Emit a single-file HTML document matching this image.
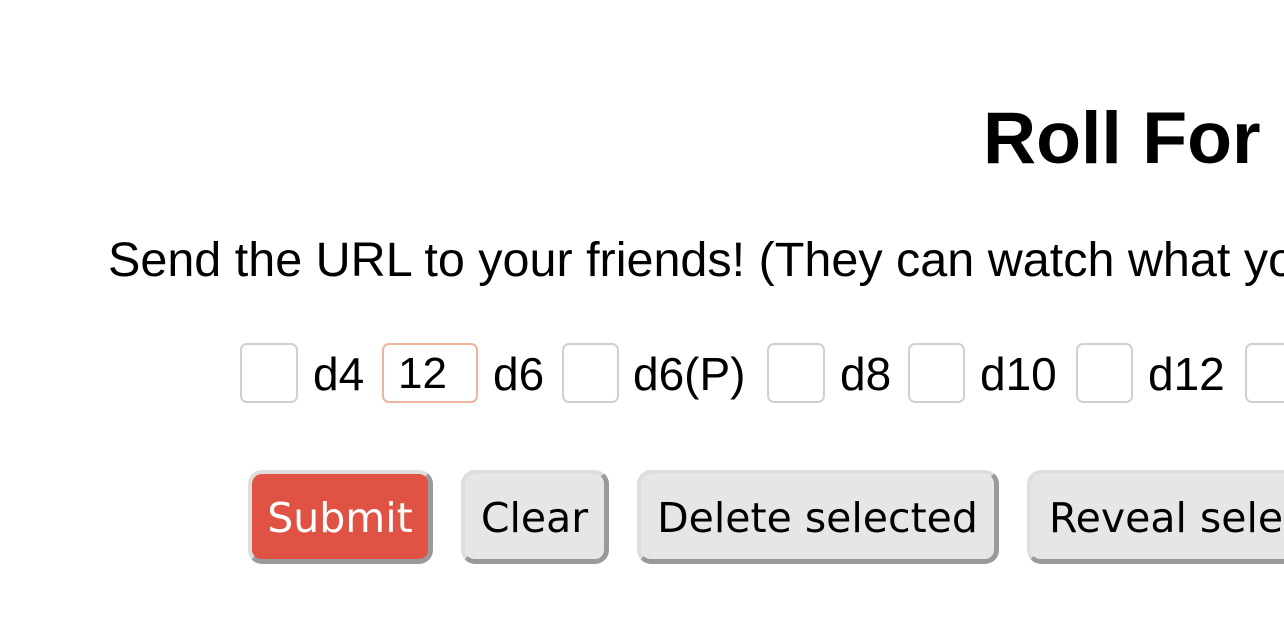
<!DOCTYPE html>
<html><head><meta charset="utf-8"><style>
html,body{margin:0;padding:0;background:#fff;width:1284px;height:642px;overflow:hidden}
#w{position:relative;width:1284px;height:642px;overflow:hidden}
.t{position:absolute;white-space:nowrap;font-family:"Liberation Sans",sans-serif;color:#000;line-height:1}
.in{position:absolute;top:343px;height:60px;box-sizing:border-box;border:2px solid #d0d0d0;border-radius:7px;background:#fff}
.b{position:absolute;top:470px;height:94px;box-sizing:border-box;border-style:solid;border-width:4px 5px 5px 4px;border-color:#dedede #9a9a9a #9a9a9a #dedede;border-radius:14px;background:#e6e6e6;font-family:"DejaVu Sans",sans-serif;font-size:41px;color:#000;display:flex;align-items:center;justify-content:center;white-space:nowrap;padding-top:2px}
</style></head><body><div id="w">
<div class="t" style="left:983px;top:101px;font-size:73.5px;font-weight:bold">Roll For</div>
<div class="t" style="left:108px;top:236px;font-size:48.5px">Send the URL to your friends! (They can watch what you roll)</div>

<div class="in" style="left:240px;width:58px"></div>
<div class="t" style="left:313px;top:351px;font-size:46px">d4</div>
<div class="in" style="left:382px;width:96px;border-color:#eeb49c"></div>
<div class="t" style="left:398px;top:352px;font-size:44px">12</div>
<div class="t" style="left:493px;top:351px;font-size:46px">d6</div>
<div class="in" style="left:562px;width:57px"></div>
<div class="t" style="left:633px;top:351px;font-size:46px">d6(P)</div>
<div class="in" style="left:767px;width:58px"></div>
<div class="t" style="left:840px;top:351px;font-size:46px">d8</div>
<div class="in" style="left:908px;width:57px"></div>
<div class="t" style="left:980px;top:351px;font-size:46px">d10</div>
<div class="in" style="left:1076px;width:57px"></div>
<div class="t" style="left:1148px;top:351px;font-size:46px">d12</div>
<div class="in" style="left:1245px;width:58px"></div>

<div class="b" style="left:248px;width:185px;background:#e05243;color:#fff">Submit</div>
<div class="b" style="left:461px;width:148px">Clear</div>
<div class="b" style="left:637px;width:362px">Delete selected</div>
<div class="b" style="left:1027px;width:362px;justify-content:flex-start;padding-left:18px">Reveal selected</div>
</div></body></html>
